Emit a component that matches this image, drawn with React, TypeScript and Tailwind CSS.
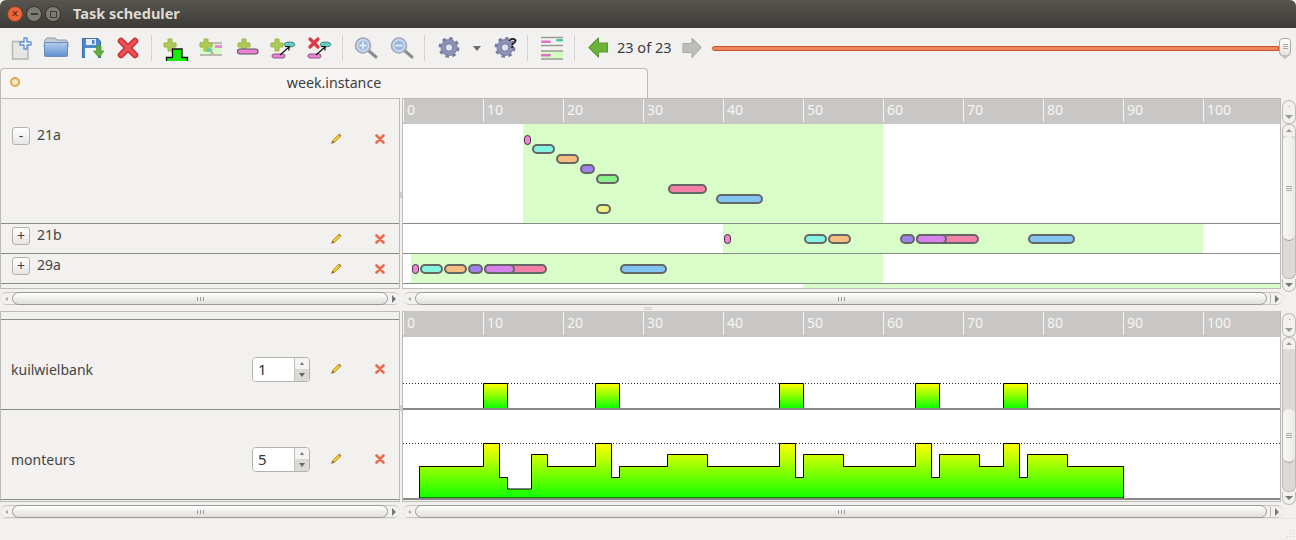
import type { ReactNode } from "react";

const FONT = "font-['Noto_Sans','Open_Sans',sans-serif]";
const TICKS = [0, 10, 20, 30, 40, 50, 60, 70, 80, 90, 100];

const PINK_DOT = "bg-[#ee82dc]";
const TEAL = "bg-[#84f3e0]";
const ORANGE = "bg-[#f5bd80]";
const PURPLE = "bg-[#9d82ec]";
const GREEN = "bg-[#8af08a]";
const ROSE = "bg-[#f482a8]";
const BLUE = "bg-[#82c4f2]";
const YELLOW = "bg-[#eef084]";
const VIOLET = "bg-[#d882ee]";

type Bar = { x0: number; x1: number; y?: number; color: string };

// x values are page pixels, y is the offset inside the row
const row1: Bar[] = [
  { x0: 523, x1: 531, y: 11, color: PINK_DOT },
  { x0: 531, x1: 555, y: 20, color: TEAL },
  { x0: 555, x1: 579, y: 30, color: ORANGE },
  { x0: 579, x1: 595, y: 40, color: PURPLE },
  { x0: 595, x1: 619, y: 50, color: GREEN },
  { x0: 667, x1: 707, y: 60, color: ROSE },
  { x0: 715, x1: 763, y: 70, color: BLUE },
  { x0: 595, x1: 611, y: 80, color: YELLOW },
];
const row2: Bar[] = [
  { x0: 723, x1: 731, color: PINK_DOT },
  { x0: 803, x1: 827, color: TEAL },
  { x0: 827, x1: 851, color: ORANGE },
  { x0: 899, x1: 915, color: PURPLE },
  { x0: 915, x1: 979, color: ROSE },
  { x0: 915, x1: 947, color: VIOLET },
  { x0: 1027, x1: 1075, color: BLUE },
];
const row3: Bar[] = [
  { x0: 411, x1: 419, color: PINK_DOT },
  { x0: 419, x1: 443, color: TEAL },
  { x0: 443, x1: 467, color: ORANGE },
  { x0: 467, x1: 483, color: PURPLE },
  { x0: 483, x1: 547, color: ROSE },
  { x0: 483, x1: 515, color: VIOLET },
  { x0: 619, x1: 667, color: BLUE },
];

const KUIL_BLOCKS = [483, 595, 779, 915, 1003];
const MONTEURS: [number, number][] = [
  [419, 498], [419, 466.5], [483, 466.5], [483, 443.5], [499, 443.5], [499, 477.5], [507, 477.5], [507, 489],
  [531, 489], [531, 454.5], [547, 454.5], [547, 466.5], [595, 466.5], [595, 443.5], [611, 443.5], [611, 477.5],
  [619, 477.5], [619, 466.5], [667, 466.5], [667, 454.5], [707, 454.5], [707, 466.5], [779, 466.5], [779, 443.5],
  [795, 443.5], [795, 477.5], [803, 477.5], [803, 454.5], [843, 454.5], [843, 466.5], [915, 466.5], [915, 443.5],
  [931, 443.5], [931, 477.5], [939, 477.5], [939, 454.5], [979, 454.5], [979, 466.5], [1003, 466.5], [1003, 443.5],
  [1019, 443.5], [1019, 477.5], [1027, 477.5], [1027, 454.5], [1067, 454.5], [1067, 466.5], [1123, 466.5], [1123, 498],
];

function Plus({ x, y }: { x: number; y: number }) {
  return (
    <path
      d={`M${x + 4} ${y}h4v4h4v4h-4v4h-4v-4h-4v-4h4z`}
      fill="#aecb55"
      stroke="#9ab548"
      strokeWidth="1"
      strokeLinejoin="round"
    />
  );
}

function Icon({ children, w = 36 }: { children: ReactNode; w?: number }) {
  return (
    <svg width={w} height="34" viewBox={`0 0 ${w} 34`} className="shrink-0">
      {children}
    </svg>
  );
}

function Gear({ cx, cy }: { cx: number; cy: number }) {
  return (
    <g>
      <circle cx={cx} cy={cy} r="9" fill="none" stroke="#767c9e" strokeWidth="2.8" strokeDasharray="3.5 3.57" />
      <circle cx={cx} cy={cy} r="8" fill="#8d93b8" stroke="#7a80a2" strokeWidth="1" />
      <circle cx={cx} cy={cy} r="3.8" fill="#dfe1ec" stroke="#6f7596" strokeWidth="1" />
    </g>
  );
}

function Magnifier({ minus }: { minus?: boolean }) {
  return (
    <g>
      <path d="M21 20l7 6" stroke="#8d8d8d" strokeWidth="3" strokeLinecap="round" />
      <circle cx="15" cy="14.5" r="7.5" fill="#c6d8ee" stroke="#a3a6b4" strokeWidth="1.6" />
      <circle cx="15" cy="14.5" r="4.6" fill="#95b6de" />
      {minus ? (
        <path d="M11.5 14.5h7" stroke="#e8eef8" strokeWidth="1.8" />
      ) : (
        <path d="M11.5 14.5h7M15 11v7" stroke="#e8eef8" strokeWidth="1.8" />
      )}
    </g>
  );
}

function AssignParts() {
  return (
    <>
      <ellipse cx="23.5" cy="13.5" rx="5.2" ry="2.4" fill="#62d0c4" stroke="#3f7f7a" />
      <rect x="6" y="23" width="13" height="4" rx="2" fill="#ec82d6" stroke="#8a5a80" />
      <path d="M14 24l9-8M19 15.5l4.2 0-.4 4" stroke="#111" strokeWidth="1.2" fill="none" />
    </>
  );
}

function Sep({ tight }: { tight?: boolean }) {
  return <div className={`ml-[4px] h-[26px] w-px shrink-0 bg-[#d6d4d0] ${tight ? "mr-[5px]" : "mr-[6px]"}`} />;
}

function Toolbar() {
  return (
    <div className="flex h-[40px] items-center pl-[3px]">
      <Icon>
        <path d="M9.5 10.5h15.5v17.5H9.5z" fill="#e6e6e4" stroke="#b3b3b1" strokeWidth="1.4" />
        <path d="M21 7h3v4h4v3h-4v4h-3v-4h-4v-3h4z" fill="#f2f7fd" stroke="#5f93d4" strokeWidth="1.4" strokeLinejoin="round" />
      </Icon>
      <Icon>
        <defs>
          <linearGradient id="fold" x1="0" y1="0" x2="0" y2="1">
            <stop offset="0" stopColor="#b4cdec" />
            <stop offset="1" stopColor="#5f90cf" />
          </linearGradient>
        </defs>
        <path d="M6 9l2-2h8l2 2h9l2 2v5H5z" fill="#c6cdd6" stroke="#8f98a6" />
        <path d="M5.5 11.5h23v13a1 1 0 0 1-1 1h-21a1 1 0 0 1-1-1z" fill="url(#fold)" stroke="#6b8fbc" />
      </Icon>
      <Icon>
        <path d="M7.5 7.5h15l3 3v16h-18z" fill="#4f88c8" stroke="#3a74b0" strokeWidth="1.1" />
        <path d="M11 8h10v6H11z" fill="#e4ecf4" />
        <path d="M17 9h2.5v4H17z" fill="#4f88c8" />
        <path d="M10 17h13v10H10z" fill="#f4f4f2" />
        <path d="M21.5 15h4.5v5h3l-5.2 6.5L18.5 20h3z" fill="#5fae3b" stroke="#4a9130" strokeWidth=".7" />
      </Icon>
      <Icon>
        <path d="M10 10l14 14M24 10L10 24" stroke="#cc2b32" strokeWidth="6.5" strokeLinecap="round" />
        <path d="M10 10l14 14M24 10L10 24" stroke="#ec5158" strokeWidth="3.6" strokeLinecap="round" />
      </Icon>
      <Sep />
      <Icon>
        <Plus x={6} y={8} />
        <path d="M8.5 30V26.5h6V18h9.5v8.5h5.5V30" fill="#14f000" stroke="#111" strokeWidth="1.3" />
      </Icon>
      <Icon>
        <path d="M6 12h22v12H6z" fill="#d8fcc8" />
        <path d="M6 12h22M6 24h22" stroke="#a8a8a4" strokeWidth="1.3" />
        <path d="M21 14h7v3h-7z" fill="#ec88d4" />
        <ellipse cx="15" cy="19" rx="3.4" ry="2" fill="#5ccdc0" />
        <circle cx="18" cy="22" r="1.4" fill="#d8a27a" />
        <Plus x={6} y={8} />
      </Icon>
      <Icon>
        <Plus x={8} y={8} />
        <rect x="7.5" y="18" width="20.5" height="5" rx="2.5" fill="#ec82d6" stroke="#555" strokeWidth="1.1" />
      </Icon>
      <Icon>
        <Plus x={5} y={8} />
        <AssignParts />
      </Icon>
      <Icon>
        <path d="M8 8l8 8M16 8l-8 8" stroke="#dc3a40" strokeWidth="3.2" strokeLinecap="round" />
        <AssignParts />
      </Icon>
      <Sep tight />
      <Icon>
        <Magnifier />
      </Icon>
      <Icon>
        <Magnifier minus />
      </Icon>
      <Sep />
      <Icon>
        <Gear cx={18} cy={16.5} />
      </Icon>
      <div className="flex w-[20px] shrink-0 justify-center">
        <div className="h-0 w-0 border-x-[4px] border-t-[5px] border-x-transparent border-t-[#6e6e6e]" />
      </div>
      <Icon>
        <Gear cx={18} cy={16.5} />
        <text x="21" y="17" fontSize="15" fontWeight="700" fill="#222" fontFamily="'Liberation Sans',sans-serif">
          ?
        </text>
      </Icon>
      <Sep />
      <Icon>
        <path d="M7 6.5h22v8H7z" fill="#f2f6ee" />
        <path d="M7 6.5h22M7 14.5h22" stroke="#9a9a96" strokeWidth="1.3" />
        <rect x="7" y="9.5" width="10" height="2.6" rx="1.3" fill="#e070c8" />
        <rect x="22" y="8" width="7" height="2.6" rx="1.3" fill="#50c0b0" />
        <path d="M7 20h22v8H7z" fill="#d4fcc0" />
        <path d="M7 20h22M7 28h22" stroke="#9a9a96" strokeWidth="1.3" />
        <rect x="7" y="23" width="10" height="2.6" rx="1.3" fill="#e070c8" />
      </Icon>
      <Sep />
      <Icon>
        <path d="M8 16.5l9.5-9.5v5h9v9h-9v5z" fill="#6cb33a" stroke="#58992e" strokeWidth="1.1" strokeLinejoin="round" />
      </Icon>
      <span className="w-[57px] shrink-0 text-[14.5px] text-[#3c3c3c]">23 of 23</span>
      <Icon>
        <path d="M27 16.5l-9-9v5H9v9h9v5z" fill="#bdbdba" stroke="#a9a9a6" strokeWidth="1.1" strokeLinejoin="round" />
      </Icon>
      <div className="ml-[2px] flex w-[579px] shrink-0 items-center">
        <div className="h-[5px] flex-1 rounded-l-full border border-[#c94f24] bg-[#f0855a]" />
        <div className="relative mb-[3px] flex h-[18px] w-[12px] flex-col items-center justify-center gap-px rounded-[4px] border border-[#a9a7a2] bg-gradient-to-b from-white to-[#e4e2de]">
          <div className="h-px w-[5px] bg-[#a9a7a2]" />
          <div className="h-px w-[5px] bg-[#a9a7a2]" />
          <div className="h-px w-[5px] bg-[#a9a7a2]" />
          <div className="absolute -bottom-[4px] h-0 w-0 border-x-[5px] border-t-[4px] border-x-transparent border-t-[#c2c0bb]" />
        </div>
      </div>
    </div>
  );
}

function Pencil() {
  return (
    <svg width="12" height="12" viewBox="0 0 12 12" className="shrink-0">
      <path d="M2.5 7.5L8.8 1.2l2 2L4.5 9.5z" fill="#f0c832" stroke="#b58d1e" strokeWidth=".8" />
      <path d="M2.5 7.5L1 11l3.5-1.5z" fill="#8a5a44" />
      <path d="M8.8 1.2l2 2" stroke="#b06a3c" strokeWidth="1.2" />
    </svg>
  );
}

function DelX() {
  return (
    <svg width="10" height="10" viewBox="0 0 10 10" className="shrink-0">
      <path d="M1.5 1.5l7 7M8.5 1.5l-7 7" stroke="#ea6a4c" strokeWidth="2.6" strokeLinecap="round" />
    </svg>
  );
}

function Actions() {
  return (
    <div className="ml-auto flex items-center">
      <div className="flex w-[12px] justify-center">
        <Pencil />
      </div>
      <div className="ml-[32px] flex w-[12px] justify-center">
        <DelX />
      </div>
    </div>
  );
}

function TaskRow({ label, sign, className }: { label: string; sign: string; className: string }) {
  return (
    <div className={`flex items-start border-b border-[#8a8a88] pl-[11px] pr-[13px] ${className}`}>
      <div className="mt-[3px] flex h-[18px] w-[18px] items-center justify-center rounded-[3px] border border-[#b3b1ac] bg-gradient-to-b from-white to-[#e8e6e3] text-[14px] leading-none text-[#444]">
        {sign}
      </div>
      <span className="ml-[7px] mt-[1px] text-[14px] leading-[20px] text-[#444]">{label}</span>
      <div className="ml-auto mt-[9px] flex">
        <Actions />
      </div>
    </div>
  );
}

function Spin({ value }: { value: number }) {
  return (
    <div className="flex h-[25px] w-[58px] overflow-hidden rounded-[4px] border border-[#b3b1ac]">
      <div className="w-[41px] bg-white pl-[5px] text-[15px] leading-[23px] text-[#333]">{value}</div>
      <div className="flex flex-1 flex-col border-l border-[#c4c2bd]">
        <div className="flex flex-1 items-center justify-center bg-[#f4f3f1]">
          <div className="h-0 w-0 border-x-[2.5px] border-b-[3px] border-x-transparent border-b-[#777]" />
        </div>
        <div className="flex flex-1 items-center justify-center bg-[#dcdad6]">
          <div className="h-0 w-0 border-x-[3.5px] border-t-[4px] border-x-transparent border-t-[#666]" />
        </div>
      </div>
    </div>
  );
}

function ResourceRow({ label, value }: { label: string; value: number }) {
  return (
    <div className="flex h-[90px] items-center border-b border-[#8a8a88] pl-[10px] pr-[13px] pt-[9px]">
      <span className="w-[241px] text-[14px] text-[#444]">{label}</span>
      <Spin value={value} />
      <Actions />
    </div>
  );
}

function Header({ className }: { className: string }) {
  return (
    <div className={`flex shrink-0 bg-[#c9c7c5] ${className}`}>
      {TICKS.map((t) => (
        <div key={t} className="h-[23px] w-[80px] shrink-0 border-l border-[#f4f4f2] pl-[3px] text-[14px] leading-[22px] text-[#f6f6f4]">
          {t}
        </div>
      ))}
    </div>
  );
}

function Bars({ bars, top }: { bars: Bar[]; top: number }) {
  return (
    <>
      {bars.map((b) => (
        <div
          key={`${b.x0}-${b.color}`}
          className={
            b.color === PINK_DOT
              ? `absolute h-[10px] rounded-full border border-[#333] ${b.color}`
              : `absolute h-[10px] rounded-[5px] border-2 border-[#666] ${b.color}`
          }
          style={{ left: b.x0 - 403 + 0.5, width: b.x1 - b.x0 - 1, top: b.y ?? top }}
        />
      ))}
    </>
  );
}

function GanttRow({ green, bars, top, className }: { green: [number, number]; bars: Bar[]; top: number; className: string }) {
  return (
    <div className={`relative overflow-hidden border-b border-[#8a8a88] bg-white ${className}`}>
      <div className="absolute inset-y-0 bg-[#d8fdc8]" style={{ left: green[0] - 403, width: green[1] - green[0] }} />
      <Bars bars={bars} top={top} />
    </div>
  );
}

function KuilChart() {
  return (
    <svg width="877" height="73" viewBox="403 337 877 73" className="block shrink-0">
      <defs>
        <linearGradient id="load" x1="0" y1="0" x2="0" y2="1">
          <stop offset="0" stopColor="#ffff00" />
          <stop offset="1" stopColor="#10ff00" />
        </linearGradient>
      </defs>
      <rect x="403" y="337" width="877" height="73" fill="#fff" />
      <path d="M403 383.5H1280" stroke="#222" strokeWidth="1" strokeDasharray="1 2" />
      {KUIL_BLOCKS.map((x) => (
        <path key={x} d={`M${x}.5 408V383.5H${x + 24}.5V408`} fill="url(#load)" stroke="#000" strokeWidth="1" />
      ))}
      <path d="M403 409H1280" stroke="#888" strokeWidth="2" />
    </svg>
  );
}

function MonteursChart() {
  const pts = MONTEURS.map(([x, y]) => `${x + 0.5},${y}`).join(" ");
  return (
    <svg width="877" height="90" viewBox="403 410 877 90" className="block shrink-0">
      <defs>
        <linearGradient id="load2" x1="0" y1="0" x2="0" y2="1">
          <stop offset="0" stopColor="#ffff00" />
          <stop offset="1" stopColor="#10ff00" />
        </linearGradient>
      </defs>
      <rect x="403" y="410" width="877" height="90" fill="#fff" />
      <path d="M403 443.5H1280" stroke="#222" strokeWidth="1" strokeDasharray="1 2" />
      <polygon points={pts} fill="url(#load2)" stroke="#000" strokeWidth="1" />
      <path d="M403 499H1280" stroke="#888" strokeWidth="2" />
    </svg>
  );
}

function VScroll({ thumb }: { thumb: string }) {
  return (
    <div className="ml-[1px] flex w-[14px] shrink-0 flex-col pt-[2px]">
      <div className="flex h-[11px] items-center justify-center rounded-t-full border border-b-0 border-[#bdbbb6]">
        <div className="h-px w-px bg-[#888]" />
      </div>
      <div className="flex h-[13px] items-center justify-center rounded-b-[6px] border border-t-0 border-[#bdbbb6]">
        <div className="h-0 w-0 border-x-[4px] border-t-[4px] border-x-transparent border-t-[#9a9a98]" />
      </div>
      <div className="flex h-[12px] items-center justify-center rounded-t-[6px] border border-b-0 border-[#bdbbb6]">
        <div className="h-0 w-0 border-x-[3px] border-b-[3px] border-x-transparent border-b-[#9a9a98]" />
      </div>
      <div className="flex-1 overflow-hidden rounded-b-[6px] border-x border-b border-[#bdbbb6] bg-[#dcdad6]">
        <div className={`flex flex-col items-center justify-center gap-px rounded-[6px] border-b border-[#a5a39e] bg-gradient-to-r from-[#f8f8f7] to-[#eceae7] ${thumb}`}>
          <div className="h-px w-[6px] bg-[#aaa]" />
          <div className="h-px w-[6px] bg-[#aaa]" />
          <div className="h-px w-[6px] bg-[#aaa]" />
        </div>
      </div>
      <div className="flex h-[13px] items-center justify-center rounded-b-full border border-t-0 border-[#bdbbb6]">
        <div className="h-0 w-0 border-x-[4px] border-t-[4px] border-x-transparent border-t-[#777]" />
      </div>
    </div>
  );
}

function HScroll({ className, tail }: { className: string; tail?: boolean }) {
  return (
    <div className={`flex h-[13px] items-center rounded-full border-y border-[#c9c7c2] ${className}`}>
      <div className="flex h-[11px] w-[12px] shrink-0 items-center justify-center">
        <div className="h-0 w-0 border-y-[2.5px] border-r-[3px] border-y-transparent border-r-[#aaa]" />
      </div>
      <div className="flex h-[13px] flex-1 items-center justify-center gap-[2px] rounded-full border border-[#9c9a96] bg-gradient-to-b from-white to-[#e0dedb]">
        <div className="h-[4px] w-px bg-[#999]" />
        <div className="h-[4px] w-px bg-[#999]" />
        <div className="h-[4px] w-px bg-[#999]" />
      </div>
      {tail && <div className="h-[13px] w-[4px] shrink-0 rounded-r-full border-r border-[#b9b7b2]" />}
      <div className="flex w-[12px] shrink-0 items-center justify-center">
        <div className="h-0 w-0 border-y-[4px] border-l-[4px] border-y-transparent border-l-[#777]" />
      </div>
    </div>
  );
}

function Handle() {
  return (
    <div className="flex w-[2px] shrink-0 items-center">
      <div className="h-[6px] w-[2px] bg-[#d2d0cb]" />
    </div>
  );
}

export default function App() {
  return (
    <div className={`flex h-[540px] w-[1296px] flex-col overflow-hidden bg-[#f2f1f0] ${FONT}`}>
      <div className="flex h-[28px] shrink-0 items-center gap-[3px] rounded-t-[6px] bg-gradient-to-b from-[#56554f] to-[#3c3b37] pl-[7px]">
        <div className="flex h-[16px] w-[16px] items-center justify-center rounded-full border border-[#8f3a1e] bg-[#e9653b] text-[12px] leading-none text-[#5a1e0c]">
          ×
        </div>
        <div className="flex h-[16px] w-[16px] items-center justify-center rounded-full border border-[#33322e] bg-[#7d7c75]">
          <div className="h-[2px] w-[7px] bg-[#3c3b37]" />
        </div>
        <div className="flex h-[16px] w-[16px] items-center justify-center rounded-full border border-[#33322e] bg-[#7d7c75]">
          <div className="h-[7px] w-[7px] border border-[#3c3b37]" />
        </div>
        <span className="ml-[9px] text-[14.5px] font-bold text-[#dfdbd2]">Task scheduler</span>
      </div>

      <Toolbar />

      <div className="flex h-[30px] shrink-0">
        <div className="relative flex h-[30px] w-[648px] items-center justify-center rounded-t-[4px] border border-b-0 border-[#bdbbb6] bg-[#f6f5f4] pb-[1px] pl-[20px] text-[14.2px] text-[#3c3c3c]">
          <div className="absolute left-[9px] top-[8px] h-[10px] w-[10px] rounded-full border-2 border-[#e2a84c] bg-[#f6e8c8]" />
          week.instance
        </div>
      </div>

      <div className="flex h-[194px] shrink-0">
        <div className="h-[191px] w-[400px] shrink-0 overflow-hidden border border-[#bdbbb6]">
          <TaskRow label="21a" sign="-" className="h-[125px] pt-[25px]" />
          <TaskRow label="21b" sign="+" className="h-[30px]" />
          <TaskRow label="29a" sign="+" className="h-[30px]" />
        </div>
        <Handle />
        <div className="h-[191px] w-[879px] shrink-0 overflow-hidden border border-[#bdbbb6]">
          <Header className="h-[25px]" />
          <GanttRow green={[523, 883]} bars={row1} top={0} className="h-[100px]" />
          <GanttRow green={[723, 1203]} bars={row2} top={10} className="h-[30px]" />
          <GanttRow green={[411, 883]} bars={row3} top={10} className="h-[30px]" />
          <div className="relative h-[4px] bg-white">
            <div className="absolute inset-y-0 left-[400px] right-0 bg-[#d8fdc8]" />
          </div>
        </div>
        <VScroll thumb="h-[105px]" />
      </div>

      <div className="flex h-[13px] shrink-0">
        <HScroll className="w-[400px]" />
        <HScroll className="ml-[3px] w-[880px]" tail />
      </div>

      <div className="flex h-[6px] shrink-0 items-center justify-center">
        <div className="h-[3px] w-[8px] border-y border-[#cfcdc8]" />
      </div>

      <div className="flex h-[194px] shrink-0">
        <div className="h-[191px] w-[400px] shrink-0 overflow-hidden border border-[#bdbbb6]">
          <div className="h-[8px] border-b border-[#8a8a88]" />
          <ResourceRow label="kuilwielbank" value={1} />
          <ResourceRow label="monteurs" value={5} />
        </div>
        <Handle />
        <div className="h-[191px] w-[879px] shrink-0 overflow-hidden border-x border-b border-[#bdbbb6]">
          <Header className="h-[26px] pt-px" />
          <KuilChart />
          <MonteursChart />
        </div>
        <VScroll thumb="mt-[60px] h-[54px]" />
      </div>

      <div className="flex h-[13px] shrink-0">
        <HScroll className="w-[400px]" />
        <HScroll className="ml-[3px] w-[880px]" tail />
      </div>

      <div className="flex flex-1 items-end justify-end border-t border-[#e8e6e3] pb-[1px] pr-[1px]">
        <svg width="10" height="10" viewBox="0 0 10 10">
          <path d="M8 1h1v1H8zM5 4h1v1H5zM8 4h1v1H8zM2 7h1v1H2zM5 7h1v1H5zM8 7h1v1H8z" fill="#d2d0cb" />
        </svg>
      </div>
    </div>
  );
}
